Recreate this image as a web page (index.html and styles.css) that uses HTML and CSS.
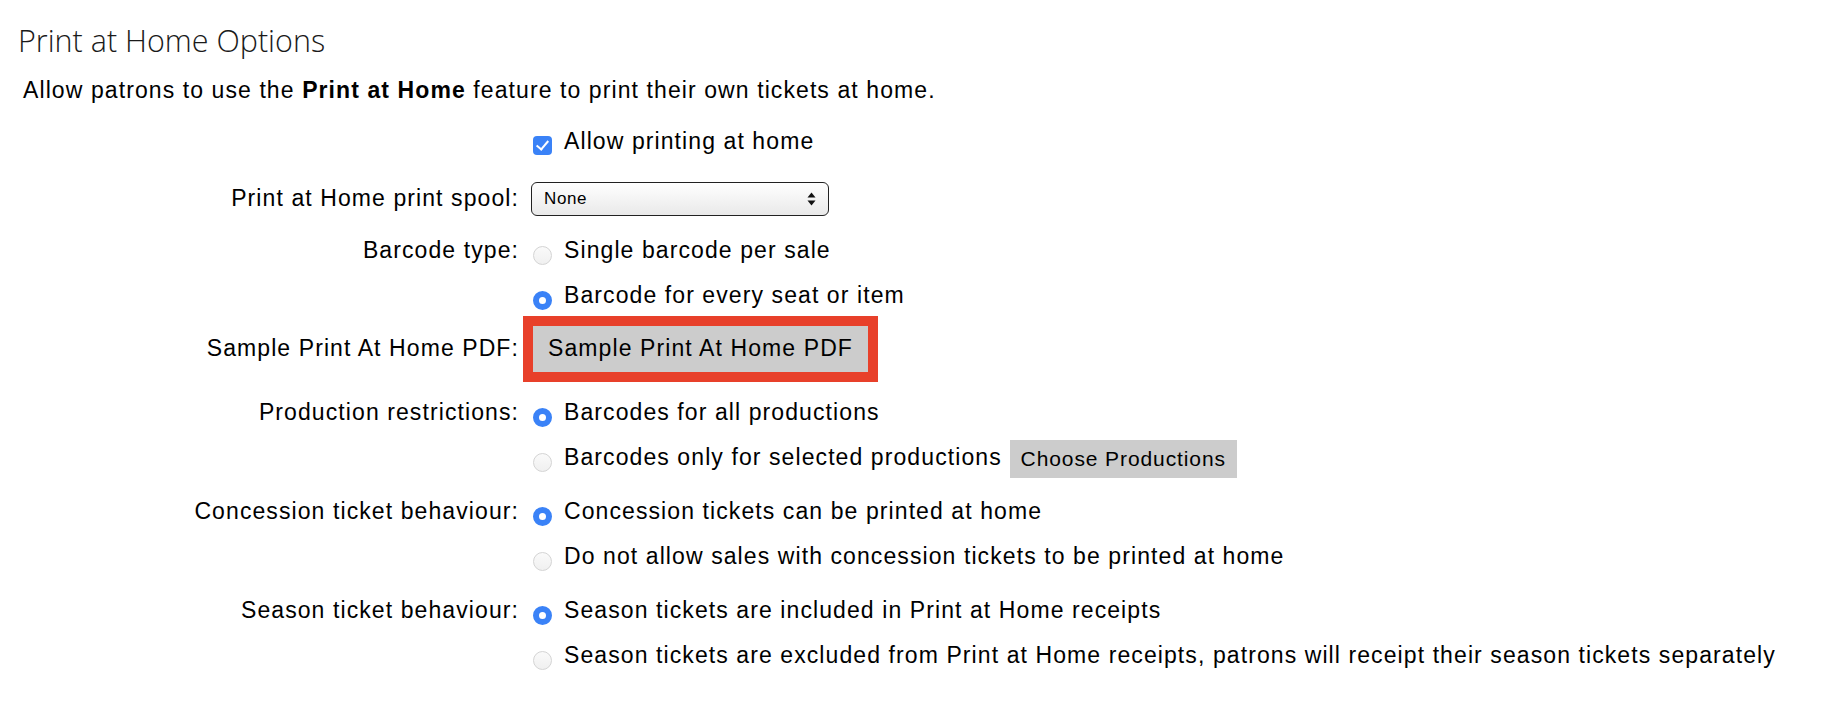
FILE: index.html
```html
<!DOCTYPE html>
<html lang="en">
<head>
    <meta charset="UTF-8">
    <meta name="viewport" content="width=device-width, initial-scale=1.0">
    <title>Print at Home Options</title>
    <link rel="stylesheet" href="styles.css">
</head>
<body>
    <div class="page">
        <h2 class="title">Print at Home Options</h2>
        <p class="intro">Allow patrons to use the <b>Print at Home</b> feature to print their own tickets at home.</p>

        <div class="form">
            <div class="row">
                <div class="label"></div>
                <div class="options">
                    <label class="opt"><input type="checkbox" class="check" checked> Allow printing at home</label>
                </div>
            </div>

            <div class="row row-select">
                <div class="label"><label for="spool">Print at Home print spool:</label></div>
                <div class="options">
                    <div class="opt">
                        <div class="select-wrap">
                            <select id="spool" class="select">
                                <option>None</option>
                            </select>
                            <svg class="select-arrows" width="9" height="14" viewBox="0 0 9 14">
                                <path d="M4.5 0.5 L8.5 5.5 L0.5 5.5 Z" fill="#111"/>
                                <path d="M4.5 13.5 L8.5 8.5 L0.5 8.5 Z" fill="#111"/>
                            </svg>
                        </div>
                    </div>
                </div>
            </div>

            <div class="row row-barcode">
                <div class="label">Barcode type:</div>
                <div class="options">
                    <label class="opt"><input type="radio" class="radio" name="barcode"> Single barcode per sale</label>
                    <label class="opt"><input type="radio" class="radio" name="barcode" checked> Barcode for every seat or item</label>
                </div>
            </div>

            <div class="row row-sample">
                <div class="label">Sample Print At Home PDF:</div>
                <div class="options">
                    <div class="opt">
                        <button class="btn btn-sample">Sample Print At Home PDF</button>
                    </div>
                </div>
            </div>

            <div class="row row-prod">
                <div class="label">Production restrictions:</div>
                <div class="options">
                    <label class="opt"><input type="radio" class="radio" name="prod" checked> Barcodes for all productions</label>
                    <div class="opt">
                        <label class="opt-inline"><input type="radio" class="radio" name="prod"> Barcodes only for selected productions</label>
                        <button class="btn btn-small">Choose Productions</button>
                    </div>
                </div>
            </div>

            <div class="row">
                <div class="label">Concession ticket behaviour:</div>
                <div class="options">
                    <label class="opt"><input type="radio" class="radio" name="conc" checked> Concession tickets can be printed at home</label>
                    <label class="opt"><input type="radio" class="radio" name="conc"> Do not allow sales with concession tickets to be printed at home</label>
                </div>
            </div>

            <div class="row">
                <div class="label">Season ticket behaviour:</div>
                <div class="options">
                    <label class="opt"><input type="radio" class="radio" name="season" checked> Season tickets are included in Print at Home receipts</label>
                    <label class="opt"><input type="radio" class="radio" name="season"> Season tickets are excluded from Print at Home receipts, patrons will receipt their season tickets separately</label>
                </div>
            </div>
        </div>
    </div>
</body>
</html>
```

FILE: styles.css
```css
body {
    margin: 0;
    padding: 0;
    background-color: #fff;
    color: #000;
    font-family: "Liberation Sans", Arial, sans-serif;
    font-size: 23px;
    letter-spacing: 1.09px;
}
.page {
    padding: 24px 0 0 20px;
}
.title {
    margin: 0 0 0 -2px;
    font-family: "Open Sans", sans-serif;
    font-weight: 300;
    font-size: 30.5px;
    letter-spacing: 0;
    line-height: 32px;
    color: #1a1a1a;
}
.intro {
    margin: 20px 0 0 3px;
    line-height: 28px;
}
.form {
    margin-top: 15px;
}
.row {
    display: grid;
    grid-template-columns: 499px auto;
    column-gap: 14px;
    margin-top: 9px;
}
.row-select {
    margin-top: 12px;
}
.row-barcode {
    margin-top: 7px;
}
.row-sample {
    margin-top: 8px;
}
.row-prod {
    margin-top: 19px;
}
.label {
    text-align: right;
    line-height: 45px;
    white-space: nowrap;
}
.options {
    display: flex;
    flex-direction: column;
}
.opt, .opt-inline {
    display: flex;
    align-items: center;
    height: 45px;
    white-space: nowrap;
}
.opt-inline {
    margin-right: 8px;
}
.check {
    appearance: none;
    width: 19px;
    height: 19px;
    margin: 8px 12px 0 0;
    border-radius: 4px;
    background-color: #3a82f7;
    position: relative;
}
.check::after {
    content: "";
    position: absolute;
    left: 6px;
    top: 2px;
    width: 5px;
    height: 10px;
    border: solid #fff;
    border-width: 0 2.5px 2.5px 0;
    transform: rotate(40deg);
}
.radio {
    appearance: none;
    width: 19px;
    height: 19px;
    margin: 10px 12px 0 0;
    border-radius: 50%;
    border: 1px solid #d4d4d4;
    background: linear-gradient(#fafafa, #f0f0f0);
    box-sizing: border-box;
}
.radio:checked {
    border: 6px solid #3a82f7;
    background: #fff;
}
.select-wrap {
    position: relative;
    display: flex;
    margin-left: -2px;
}
.select {
    appearance: none;
    width: 298px;
    height: 34px;
    padding: 0 12px;
    border: 1.5px solid #222;
    border-radius: 6px;
    background: linear-gradient(#ffffff, #e9e9e9);
    font-family: "Liberation Sans", Arial, sans-serif;
    font-size: 17px;
    letter-spacing: 0.6px;
    color: #000;
}
.select-arrows {
    position: absolute;
    right: 13px;
    top: 10px;
}
.btn {
    border: none;
    border-radius: 0;
    background-color: #cccccc;
    color: #000;
    font-family: "Liberation Sans", Arial, sans-serif;
    cursor: pointer;
}
.btn-sample {
    width: 335px;
    height: 46px;
    font-size: 23px;
    letter-spacing: 1.1px;
    outline: 10px solid #e8402a;
}
.btn-small {
    width: 227px;
    height: 38px;
    margin-top: 2px;
    font-size: 21px;
    letter-spacing: 0.9px;
}
```
